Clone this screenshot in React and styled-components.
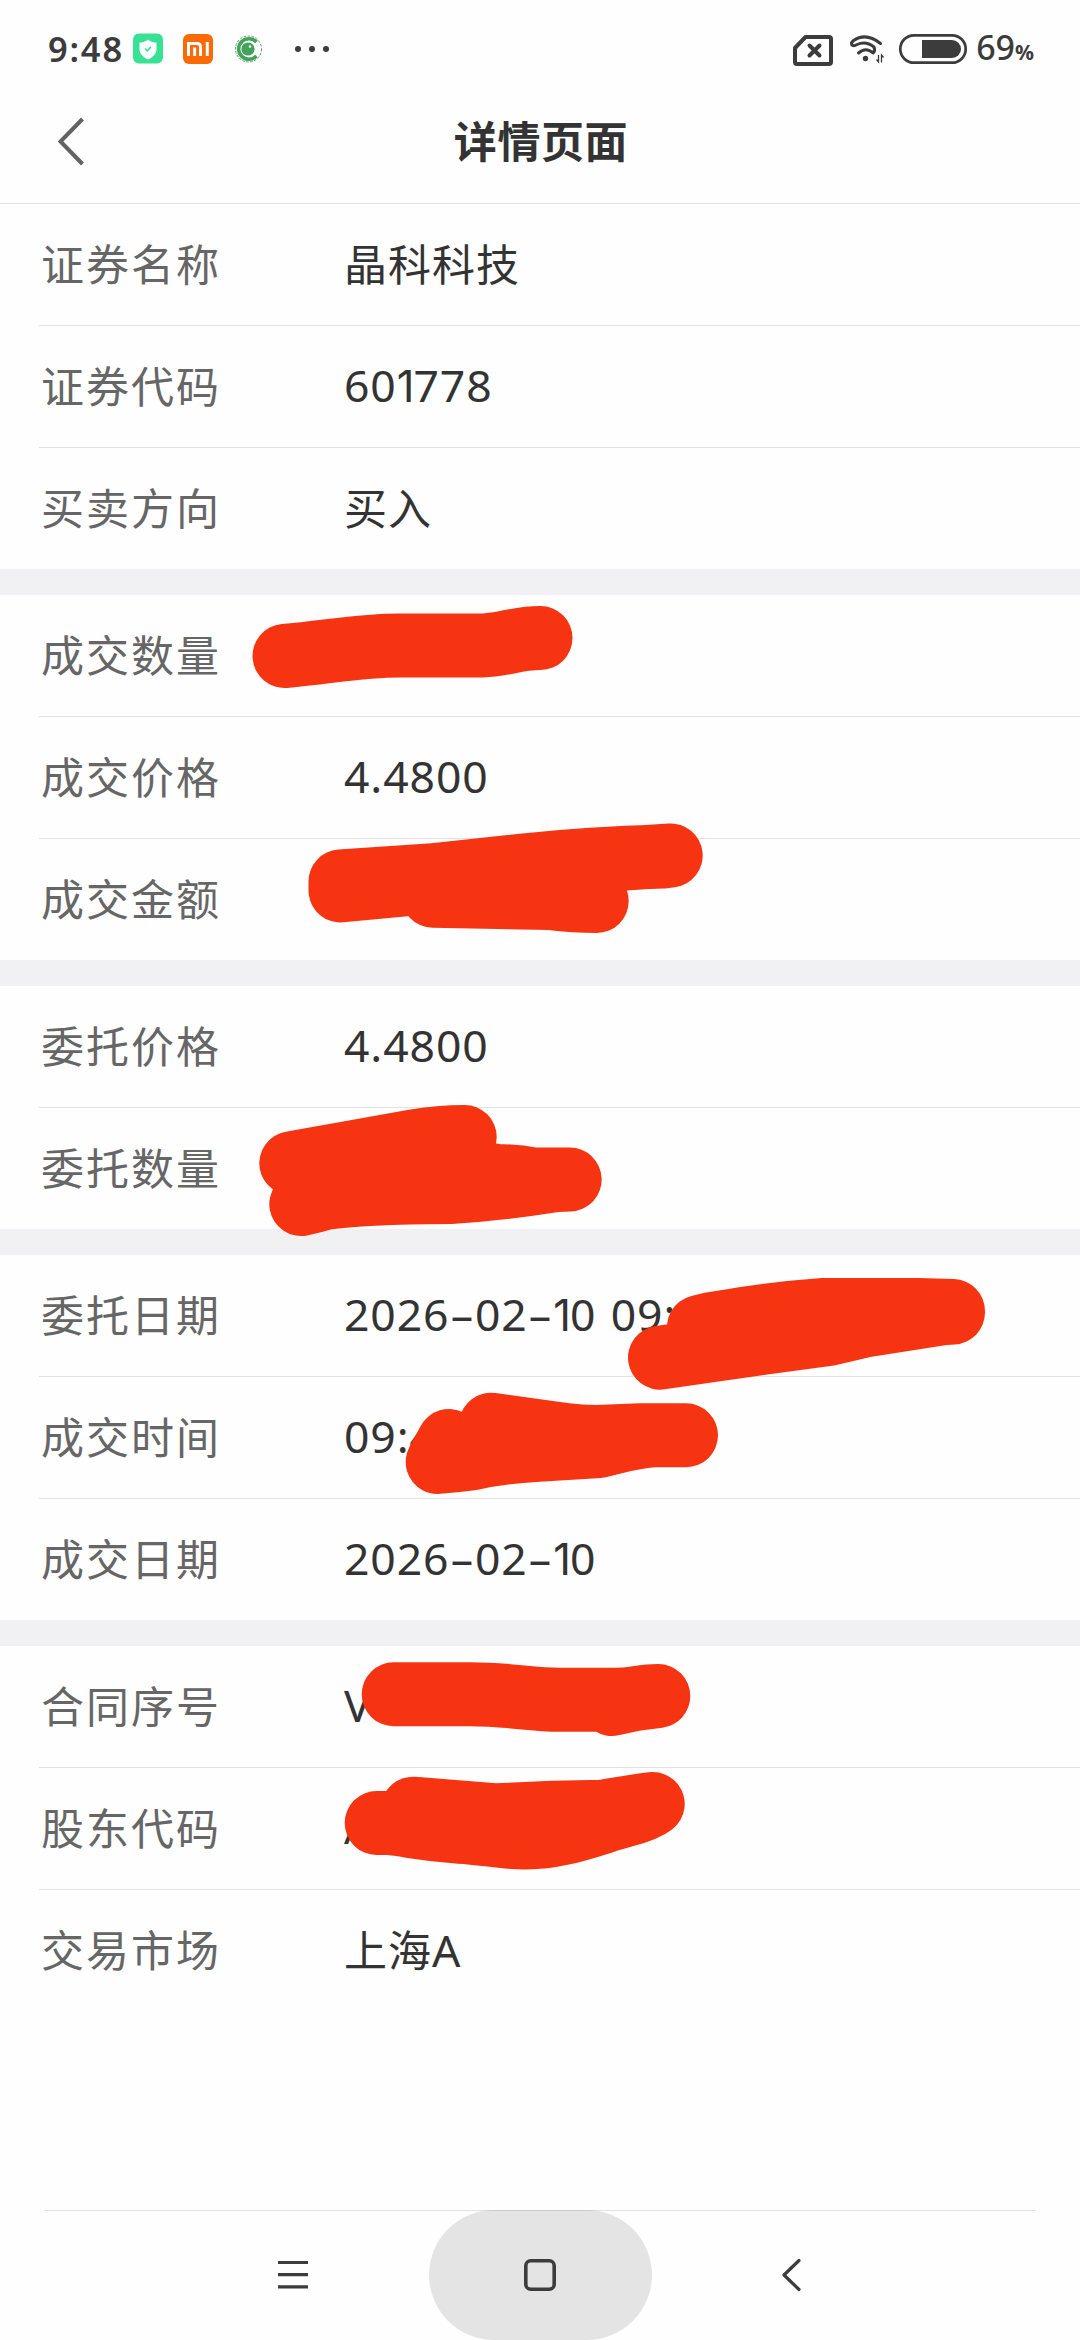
import React from 'react';
import styled, { createGlobalStyle } from 'styled-components';

const GlobalStyle = createGlobalStyle`
  body {
    margin: 0;
    background: #fefefe;
  }
`

const Page = styled.div`
  position: relative;
  width: 1080px;
  height: 2340px;
  overflow: hidden;
  display: flex;
  flex-direction: column;
  background: #fefefe;
  color: #333333;
  font-family: "Noto Sans", "Noto Sans CJK SC", sans-serif;
`

const StatusBar = styled.div`
  height: 98px;
  padding: 0 46px 0 48px;
  box-sizing: border-box;
  display: flex;
  align-items: center;
  justify-content: space-between;
  color: #3c3c3c;
`

const StatusGroup = styled.div`
  display: flex;
  align-items: center;
`

const Clock = styled.span`
  width: 85px;
  font-size: 34.5px;
  font-weight: 600;
  line-height: 40px;
  letter-spacing: 1.8px;
  white-space: nowrap;
`

const Battery = styled.span`
  margin-left: 9px;
  font-size: 34px;
  font-weight: 500;
  line-height: 40px;
  white-space: nowrap;
`

const Percent = styled.span`
  font-size: 21px;
  font-weight: 700;
`

const StatusIcon = styled.svg`
  display: block;
`

const Header = styled.div`
  height: 106px;
  padding-bottom: 18px;
  box-sizing: border-box;
  border-bottom: 1px solid #e2e2e2;
  display: grid;
  grid-template-columns: 140px 1fr 140px;
  align-items: center;
`

const BackButton = styled.svg`
  display: block;
  margin-left: 56px;
`

const Title = styled.h1`
  margin: 0;
  padding-left: 2px;
  text-align: center;
  font-size: 43px;
  font-weight: 700;
  line-height: 60px;
  letter-spacing: 0.6px;
`

const Section = styled.div`
  padding-left: 39px;
  & + & {
    border-top: 26px solid #f1f1f3;
  }
`

const Row = styled.div`
  height: 122px;
  box-sizing: border-box;
  border-bottom: 1px solid #e2e2e2;
  display: grid;
  grid-template-columns: 305px 1fr;
  align-items: center;
  &:last-child {
    height: 121px;
    border-bottom: none;
  }
`

const Label = styled.div`
  padding-left: 2px;
  color: #666666;
  font-size: 43px;
  line-height: 60px;
  letter-spacing: 2px;
`

const Value = styled.div`
  padding-bottom: 3px;
  font-size: 44.5px;
  line-height: 60px;
  letter-spacing: 0.9px;
  word-spacing: 2px;
  white-space: nowrap;
`

const CjkValue = styled(Value)`
  padding-bottom: 0;
`

const Cjk = styled.span`
  font-size: 43px;
  letter-spacing: 1px;
`

const One = styled.span`
  font-family: Inter, sans-serif;
  font-size: 43.5px;
  line-height: 1;
  letter-spacing: -1px;
`

const Dash = styled.span`
  display: inline-block;
  margin: 0 5.6px;
  letter-spacing: 0;
  transform: scaleX(1.75);
`

const MarkerLayer = styled.svg`
  position: absolute;
  left: 0;
  top: 0;
  fill: none;
  stroke: #f63411;
  stroke-width: 64px;
  stroke-linecap: round;
  stroke-linejoin: round;
  pointer-events: none;
`

const NavBar = styled.div`
  height: 130px;
  margin: auto 44px 0;
  box-sizing: border-box;
  box-shadow: inset 0 1px 0 #e2e2e2;
  display: flex;
  justify-content: center;
  gap: 26px;
`

const NavButton = styled.div`
  width: 223px;
  height: 130px;
  border-radius: 65px;
  background: ${props => props.$pressed ? 'rgba(0, 0, 0, 0.1)' : 'transparent'};
  display: flex;
  align-items: center;
  justify-content: center;
`

const sections = [
  [
    ['证券名称', '晶科科技'],
    ['证券代码', '601778'],
    ['买卖方向', '买入'],
  ],
  [
    ['成交数量', ''],
    ['成交价格', '4.4800'],
    ['成交金额', ''],
  ],
  [
    ['委托价格', '4.4800'],
    ['委托数量', ''],
  ],
  [
    ['委托日期', '2026-02-10 09:'],
    ['成交时间', '09:4'],
    ['成交日期', '2026-02-10'],
  ],
  [
    ['合同序号', 'V'],
    ['股东代码', 'A'],
    ['交易市场', '上海A'],
  ],
];

// freehand strokes that hide the private values
const strokes = [
  'M284.5 656 C330 652 360 645.4 400 645.4 H483 C505 645 515 638 540.5 638',
  'M340.5 881.5 L430 875.5 L523 865.5 Q590 858.5 663 856.5 L670.7 855.5 L628 858.3 L410 884 L340.5 890.5 Z',
  'M433 895.7 L550 898 Q575 901 596.7 901',
  'M291.3 1163.3 L346 1153.5 L413 1141.5 Q440 1137 464.7 1137',
  'M301.3 1204 Q312 1202 325 1198 C350 1194 380 1192.5 450 1192 Q500 1189 557 1180 L569.7 1179.5 H533 Q515 1176 496 1176 L464 1170 L330 1180',
  'M660 1357.7 L772 1341.5 L828 1334 L862 1326 L945 1313 L953 1312.5 V1311 L918 1310 H824 Q770 1314 725 1322 Q710 1324 699 1327',
  'M449 1441 L437.7 1462 L454 1460.5 L471 1458.5 Q500 1452 538 1449.7 L599 1446 Q640 1435.5 655 1435.3 H686 H641 L597 1437 Q580 1437 565 1435 L491 1424.7',
  'M393.7 1694.3 H470 C510 1694.3 530 1699.7 560 1699.7 H615 C635 1699.7 640 1696 658.3 1696 L635 1699 L611.7 1704',
  'M376.7 1823 H388 C410 1825 420 1829 460 1831.7 C485 1833 500 1837.5 524 1837.5 C560 1838 590 1825 624 1815.5 Q645 1810 652.7 1804 Q630 1807 603 1811.7 L553 1812.7 L497 1815.3 L413 1808.7',
];

const renderText = text => text.split(/([-1]|[\u4e00-\u9fff]+)/).map((part, i) => {
  if (part === '1') return <One key={i}>1</One>;
  if (part === '-') return <Dash key={i}>-</Dash>;
  if (/[\u4e00-\u9fff]/.test(part)) return <Cjk key={i}>{part}</Cjk>;
  return part;
});

const DetailRow = ({ label, value }) => {
  const Text = /[\u4e00-\u9fff]/.test(value) ? CjkValue : Value;
  return (
    <Row>
      <Label>{label}</Label>
      <Text>{renderText(value)}</Text>
    </Row>
  )
}

const StatusIconsLeft = () => (
  <StatusIcon width="200" height="40" viewBox="133 29 200 40">
    <rect x="133" y="33.5" width="30" height="30" rx="6" fill="#38e194" />
    <path d="M148 39.5 C151 42 153.5 42.5 156.5 42.5 V49 C156.5 54 152.5 57.5 148 59.5 C143.5 57.5 139.5 54 139.5 49 V42.5 C142.5 42.5 145 42 148 39.5 Z" fill="#fff" />
    <path d="M145 48.5 L147.3 50.8 L151 46.8" fill="none" stroke="#38e194" strokeWidth="1.6" />
    <rect x="183" y="34" width="30" height="30" rx="6" fill="#fb6a05" />
    <path d="M188.5 56 V43.5 H197 Q200.5 43.5 200.5 47 V56 M207.3 42 V56" fill="none" stroke="#fff" strokeWidth="3" />
    <path d="M194.6 47.5 V56" fill="none" stroke="#fff" strokeWidth="3" />
    <circle cx="248.5" cy="49" r="13" fill="none" stroke="#43a35a" strokeWidth="1" strokeDasharray="2.5 1.5" />
    <path d="M256.5 42 A10.3 10.3 0 1 0 256.5 56" fill="none" stroke="#43a35a" strokeWidth="3.5" />
    <circle cx="248" cy="49" r="6.6" fill="#43a35a" />
    <circle cx="250" cy="46.5" r="1.3" fill="#fff" />
    <circle cx="298" cy="49" r="3" fill="#3c3c3c" />
    <circle cx="312" cy="49" r="3" fill="#3c3c3c" />
    <circle cx="326" cy="49" r="3" fill="#3c3c3c" />
  </StatusIcon>
)

const StatusIconsRight = () => (
  <StatusIcon width="176" height="40" viewBox="790 29 176 40" fill="none" stroke="#3c3c3c">
    <path d="M804.5 37 H828 Q830 37 830 39 V62 Q830 64 828 64 H796 Q794 64 794 62 V48 Z" strokeWidth="4" strokeLinejoin="round" />
    <path d="M808.5 45.5 L818.5 55.5 M818.5 45.5 L808.5 55.5" strokeWidth="4" strokeLinecap="round" />
    <path d="M879.5 43.5 Q865 32 852.5 40.5 Q849.5 43 851 45 Q853 46.5 856 44.5 Q865 40.5 873 47 Q874.5 51 872 53 Q865 46.5 857.5 53" strokeWidth="3" strokeLinecap="round" strokeLinejoin="round" />
    <circle cx="864.5" cy="58.5" r="2.7" fill="#3c3c3c" stroke="none" />
    <path d="M877.5 55 V62 L875.5 59.5 M880.5 62.5 V55 L882.5 57.5" strokeWidth="1.3" />
    <rect x="899.3" y="35.3" width="65.4" height="27.4" rx="13.7" strokeWidth="2.7" />
    <path d="M921 40 H951 A9 9 0 0 1 951 58 H921 Z" fill="#3c3c3c" stroke="none" />
  </StatusIcon>
)

class App extends React.Component {
  render() {
    return (
      <Page>
        <GlobalStyle />
        <StatusBar>
          <StatusGroup>
            <Clock>9:48</Clock>
            <StatusIconsLeft />
          </StatusGroup>
          <StatusGroup>
            <StatusIconsRight />
            <Battery>69<Percent>%</Percent></Battery>
          </StatusGroup>
        </StatusBar>
        <Header>
          <BackButton width="32" height="52" viewBox="0 0 32 52" fill="none" stroke="#636363" strokeWidth="4">
            <path d="M26.5 3 L4.5 25.5 L26.5 48" />
          </BackButton>
          <Title>详情页面</Title>
        </Header>
        {sections.map((rows, i) => (
          <Section key={i}>
            {rows.map(([label, value]) => <DetailRow key={label} label={label} value={value} />)}
          </Section>
        ))}
        <NavBar>
          <NavButton>
            <svg width="36" height="36" viewBox="-18 -18 36 36" fill="none" stroke="#3c3c3c" strokeWidth="3.2">
              <path d="M-13 -12.5 H17 M-13 -0.3 H17 M-13 11.8 H17" />
            </svg>
          </NavButton>
          <NavButton $pressed>
            <svg width="36" height="36" viewBox="-18 -18 36 36" fill="none" stroke="#3c3c3c" strokeWidth="3.6">
              <rect x="-14.2" y="-14.2" width="28.4" height="28.4" rx="5" />
            </svg>
          </NavButton>
          <NavButton>
            <svg width="36" height="36" viewBox="-18 -18 36 36" fill="none" stroke="#3c3c3c" strokeWidth="3.2" strokeLinecap="round" strokeLinejoin="round">
              <path d="M10 -14.5 L-5 0 L10 14.5" />
            </svg>
          </NavButton>
        </NavBar>
        <MarkerLayer width="1080" height="2340" viewBox="0 0 1080 2340">
          {strokes.map(d => <path key={d} d={d} />)}
        </MarkerLayer>
      </Page>
    )
  }
}

export default App;
